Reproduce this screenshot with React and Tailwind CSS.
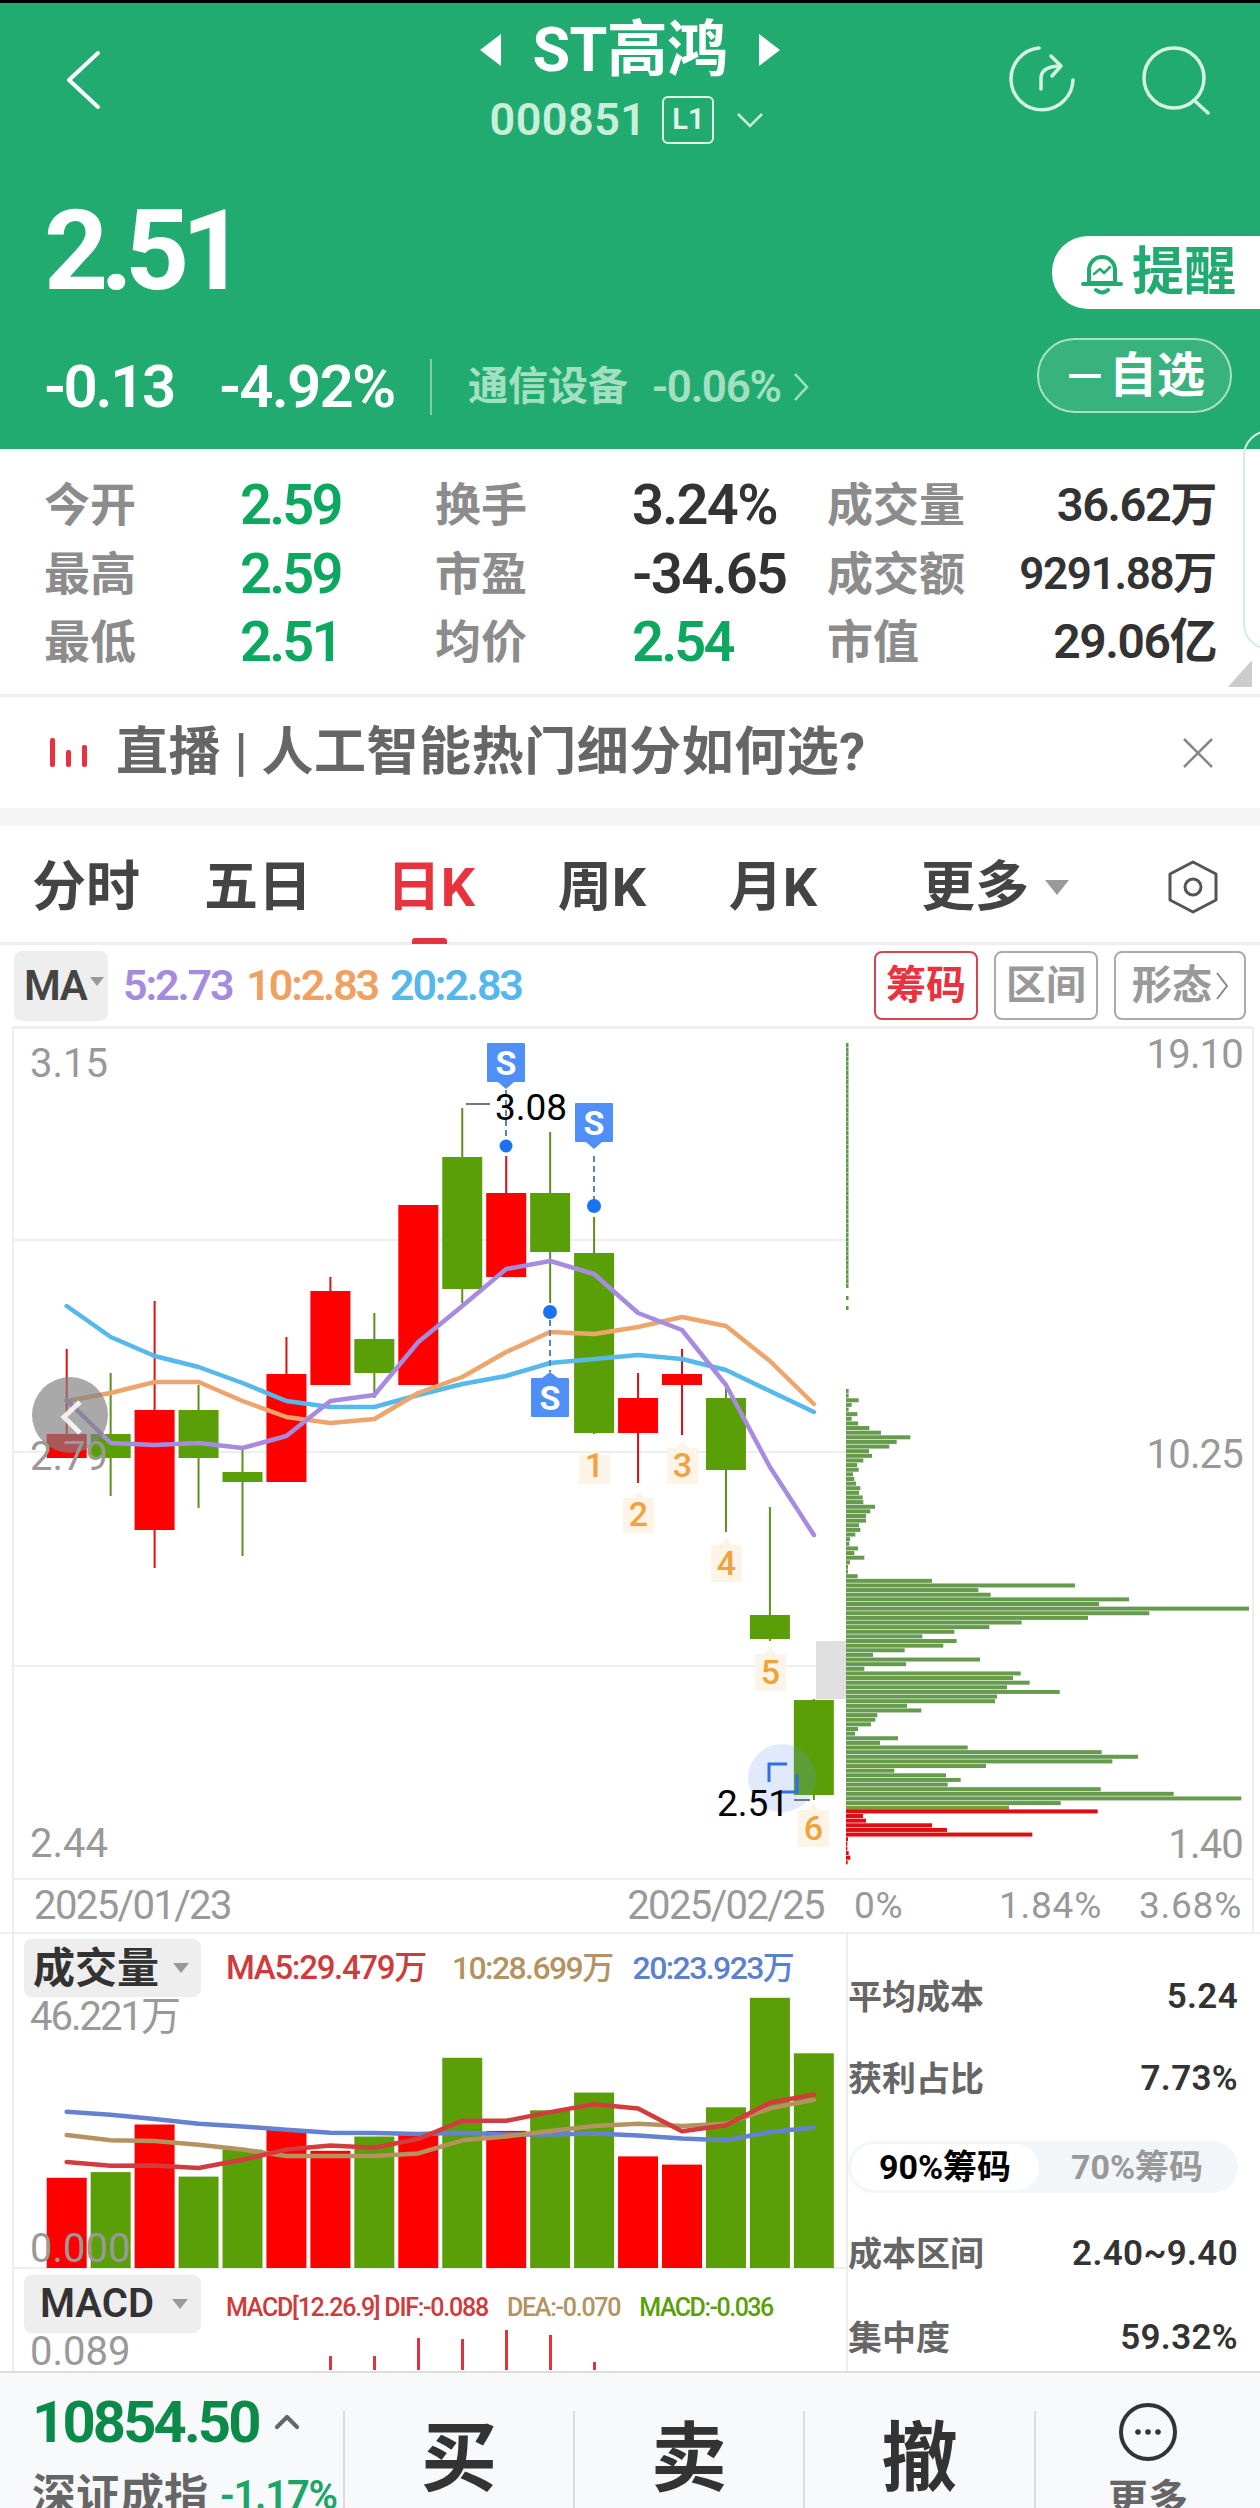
import { ChevronUp } from 'lucide-react';

const GREEN = '#5b9f08';
const RED = '#ff0000';

// candles measured off the reference: [kind, wickTop, bodyTop, bodyBottom, wickBottom]
const candles = [
  ['r', 1349, 1434, 1458, 1458], ['g', 1373, 1434, 1458, 1496], ['r', 1301, 1410, 1530, 1568],
  ['g', 1385, 1410, 1458, 1508], ['g', 1450, 1472, 1482, 1556], ['r', 1337, 1374, 1482, 1482],
  ['r', 1277, 1291, 1385, 1385], ['g', 1313, 1339, 1373, 1398], ['r', 1205, 1205, 1385, 1385],
  ['g', 1108, 1157, 1289, 1303], ['r', 1156, 1193, 1277, 1277], ['g', 1132, 1193, 1252, 1303],
  ['g', 1217, 1253, 1433, 1434], ['r', 1373, 1398, 1433, 1483], ['r', 1349, 1374, 1385, 1435],
  ['g', 1385, 1398, 1470, 1532], ['g', 1507, 1615, 1639, 1641], ['g', 1699, 1700, 1795, 1800],
];
const cx = (i) => 66.7 + i * 43.95;

const line = (ys) => ys.map((y, i) => `${cx(i).toFixed(1)},${y}`).join(' ');

const ma20 = [1306, 1337, 1356, 1367, 1383, 1401, 1407, 1407, 1395, 1384, 1376, 1363, 1359, 1355, 1359, 1370, 1391, 1412];
const ma10 = [1401, 1393, 1382, 1382, 1401, 1417, 1423, 1419, 1393, 1377, 1352, 1332, 1334, 1327, 1317, 1326, 1361, 1404];
const ma5 = [1400, 1443, 1445, 1443, 1448, 1436, 1401, 1395, 1342, 1306, 1269, 1261, 1274, 1313, 1330, 1385, 1467, 1535];

const volTops = [690, 675, 548, 687, 615, 560, 618, 580, 575, 370, 565, 510, 463, 633, 655, 502, 210, 358];
const vy = (z) => +(1920 + z * 0.375).toFixed(1);
const volBlue = [514, 522, 533, 546, 553, 562, 570, 571, 573, 570, 575, 575, 572, 577, 585, 590, 568, 556].map(vy);
const volBrown = [576, 590, 592, 602, 615, 632, 632, 632, 625, 590, 580, 565, 552, 546, 552, 546, 505, 482].map(vy);
const volRed = [648, 658, 657, 664, 642, 615, 604, 610, 586, 538, 538, 515, 494, 505, 566, 550, 490, 468].map(vy);

// chip distribution bar lengths, bottom of the high section down to the low end
const chipGreen = [
  8, 8, 38, 17, 8, 34, 17, 36, 70, 105, 193, 152, 130, 69, 78, 52, 33, 38, 21, 25, 30, 43, 39, 50,
  52, 87, 73, 60, 60, 39, 43, 28, 12, 10, 36, 25, 55, 12, 6, 6, 35, 258, 687, 397, 434, 849, 759, 1209, 910, 726,
  527, 430, 325, 229, 332, 292, 176, 81, 402, 180, 55, 524, 501, 551, 483, 641, 453, 447, 183, 226, 94, 88, 75,
  36, 27, 156, 102, 365, 767, 876, 799, 420, 145, 300, 344, 305, 764, 983, 1186, 644, 489,
];
const chipRed = [755, 51, 60, 258, 303, 559, 6, 4, 4, 8, 13, 5];
const thinRows = Array.from({ length: 53 }, (_, i) => 1043 + i * 4.63);

const grayNum = "absolute text-[40px] leading-[40px] text-[#999]";
const statLabel = "text-[46px] leading-[68px] text-[#8c8c8c] font-bold";
const statGreen = "text-[56px] leading-[68px] font-semibold tracking-[-0.05em] text-[#0ca85f]";
const statDark = "text-[56px] leading-[68px] font-semibold tracking-[-0.03em] text-[#333]";
const statRight = "text-right leading-[68px] font-semibold tracking-[-0.03em] text-[#333]";

function SMark({ x, y, down }) {
  return (
    <g>
      <rect x={x} y={y} width="38" height="39" rx="1" fill="#4f8ff7" />
      {down
        ? <path d={`M${x + 11} ${y + 39} L${x + 19} ${y + 46} L${x + 27} ${y + 39} Z`} fill="#4f8ff7" />
        : <path d={`M${x + 11} ${y} L${x + 19} ${y - 6} L${x + 27} ${y} Z`} fill="#4f8ff7" />}
      <text x={x + 19} y={y + 32} textAnchor="middle" fontSize="34" fontWeight="700" fill="#fff">S</text>
    </g>
  );
}

function NumTag({ x, top, bottom, n }) {
  return (
    <g>
      <path d={`M${x} ${top + 7} L${x + 10} ${top + 7} L${x + 15.5} ${top} L${x + 21} ${top + 7} L${x + 31} ${top + 7} L${x + 31} ${bottom} L${x} ${bottom} Z`} fill="#fdf4e8" />
      <text x={x + 15.5} y={bottom - 7} textAnchor="middle" fontSize="34" fontWeight="500" fill="#f2a23c">{n}</text>
    </g>
  );
}

function KChart() {
  return (
    <svg className="absolute inset-0" width="832" height="849" viewBox="14 1029 832 849">
      {[1240, 1452, 1666].map((y) => <rect key={y} x="14" y={y - 1} width="832" height="2" fill="#eeeeee" />)}
      <rect x="816" y="1641" width="30" height="58" fill="#e0e0e0" />
      {candles.map(([k, wt, bt, bb, wb], i) => {
        const c = k === 'r' ? RED : GREEN;
        return (
          <g key={i}>
            <rect x={cx(i) - 1} y={wt} width="2" height={wb - wt} fill={k === 'r' ? '#e01010' : '#5f8f20'} />
            <rect x={cx(i) - 20} y={bt} width="40" height={bb - bt} fill={c} />
          </g>
        );
      })}
      <polyline points={line(ma20)} fill="none" stroke="#57b8ec" strokeWidth="4.5" strokeLinejoin="round" strokeLinecap="round" />
      <polyline points={line(ma10)} fill="none" stroke="#eda56c" strokeWidth="4.5" strokeLinejoin="round" strokeLinecap="round" />
      <polyline points={line(ma5)} fill="none" stroke="#a68be0" strokeWidth="4.5" strokeLinejoin="round" strokeLinecap="round" />

      {/* scroll-back handle */}
      <circle cx="70" cy="1415" r="38" fill="#808080" fillOpacity="0.68" />
      <polyline points="80,1402 64,1417 80,1433" fill="none" stroke="#fff" strokeOpacity="0.85" strokeWidth="5" />

      {/* trade marks */}
      <line x1="506" y1="1090" x2="506" y2="1140" stroke="#4a88c8" strokeWidth="2" strokeDasharray="6 4" />
      <circle cx="506" cy="1146" r="6.5" fill="#1a73f0" />
      <line x1="594" y1="1156" x2="594" y2="1200" stroke="#4a88c8" strokeWidth="2" strokeDasharray="6 4" />
      <circle cx="594" cy="1206" r="7" fill="#1a73f0" />
      <line x1="550" y1="1320" x2="550" y2="1372" stroke="#4a88c8" strokeWidth="2" strokeDasharray="6 4" />
      <circle cx="550" cy="1312" r="7" fill="#1a73f0" />
      <SMark x={487} y={1043} down />
      <SMark x={575} y={1103} down />
      <SMark x={531} y={1378} />

      <NumTag x={579} top={1448} bottom={1484} n="1" />
      <NumTag x={623} top={1491} bottom={1533} n="2" />
      <NumTag x={667} top={1441} bottom={1484} n="3" />
      <NumTag x={711} top={1538} bottom={1582} n="4" />
      <NumTag x={755} top={1647} bottom={1691} n="5" />
      <NumTag x={798} top={1803} bottom={1847} n="6" />

      <rect x="466" y="1103" width="24" height="2" fill="#777" />
      <text x="495" y="1120" fontSize="37" fill="#000">3.08</text>

      {/* latest price focus */}
      <circle cx="782" cy="1778" r="34" fill="#6496f0" fillOpacity="0.2" />
      <path d="M769 1782 V1764 H787" fill="none" stroke="#2f6fe8" strokeWidth="3" />
      <path d="M797 1774 V1792 H779" fill="none" stroke="#2f6fe8" strokeWidth="3" />
      <text x="717" y="1816" fontSize="37" fill="#000">2.51</text>
      <rect x="794" y="1799" width="16" height="2" fill="#777" />
    </svg>
  );
}

function ChipChart() {
  return (
    <svg className="absolute inset-0" width="406" height="849" viewBox="846 1029 406 849">
      {thinRows.map((y) => <rect key={y} x="846" y={y} width="2.5" height="4.2" fill="#5f9a45" />)}
      <rect x="846" y="1296" width="2.5" height="4" fill="#5f9a45" />
      <rect x="846" y="1306" width="2.5" height="4" fill="#5f9a45" />
      {chipGreen.map((w, i) => (
        <rect key={i} x="846" y={1389 + i * 4.63} width={w / 3} height="4" fill={i === chipGreen.length - 1 ? '#7d9a3f' : '#669b4d'} />
      ))}
      {chipRed.map((w, i) => (
        <rect key={i} x="846" y={1809.4 + i * 4.63} width={w / 3} height="4" fill="#e00c12" />
      ))}
    </svg>
  );
}

function VolChart() {
  return (
    <svg className="absolute inset-0" width="832" height="335" viewBox="14 1935 832 335">
      {volTops.map((t, i) => (
        <rect key={i} x={cx(i) - 20} y={vy(t)} width="40" height={2269 - vy(t)} fill={candles[i][0] === 'r' ? RED : GREEN} />
      ))}
      <polyline points={line(volBlue)} fill="none" stroke="#6482d2" strokeWidth="4.5" strokeLinejoin="round" strokeLinecap="round" />
      <polyline points={line(volBrown)} fill="none" stroke="#b3935f" strokeWidth="4.5" strokeLinejoin="round" strokeLinecap="round" />
      <polyline points={line(volRed)} fill="none" stroke="#d23c3c" strokeWidth="4.5" strokeLinejoin="round" strokeLinecap="round" />
    </svg>
  );
}

function ChipRow({ label, value, className }) {
  return (
    <div className={`flex items-center justify-between h-[40px] ${className}`}>
      <span className="text-[34px] font-bold text-[#666]">{label}</span>
      <span className="text-[35px] font-semibold tracking-[0.01em] text-[#333]">{value}</span>
    </div>
  );
}

export default function App() {
  return (
    <div className="relative w-[1260px] h-[2508px] overflow-hidden bg-white font-['Roboto','Noto_Sans_CJK_SC',sans-serif]">
      {/* Quote header */}
      <header className="h-[449px] border-t-[3px] border-black bg-[#22ab70]">
        <div className="grid grid-cols-[1fr_auto_1fr] h-[193px]">
          <div className="pl-[66px] pt-[47px]">
            <svg width="34" height="60" viewBox="0 0 34 60" fill="none" stroke="#fff" strokeWidth="4" strokeLinecap="round" strokeLinejoin="round">
              <polyline points="32,3 3,30 32,57" />
            </svg>
          </div>
          <div className="flex flex-col items-center pt-[14px]">
            <div className="flex items-center gap-[32px] h-[66px]">
              <span className="w-0 h-0 border-y-[16px] border-y-transparent border-r-[21px] border-r-white" />
              <span className="text-[61px] leading-[66px] font-bold text-white tracking-[-0.01em]">ST高鸿</span>
              <span className="w-0 h-0 border-y-[16px] border-y-transparent border-l-[21px] border-l-white" />
            </div>
            <div className="flex items-center mt-[12px] -ml-[6px]">
              <span className="text-[45px] leading-[50px] font-semibold tracking-[0.01em] text-[#c9efdc]">000851</span>
              <span className="ml-[16px] flex items-center justify-center w-[52px] h-[48px] rounded-[6px] border-2 border-[#e4f5ec] text-[29px] font-semibold text-[#e4f5ec]">L1</span>
              <svg className="ml-[22px]" width="28" height="16" viewBox="0 0 28 16" fill="none" stroke="#c9efdc" strokeWidth="2.5">
                <polyline points="2,2 14,14 26,2" />
              </svg>
            </div>
          </div>
          <div className="flex justify-end gap-[66px] pr-[50px] pt-[42px]">
            <svg width="68" height="68" viewBox="0 0 68 68" fill="none" stroke="#d5f2e4" strokeWidth="3.5" strokeLinecap="round" strokeLinejoin="round">
              <path d="M31 3 A31 31 0 1 0 65 35" />
              <path d="M33 44 V33 Q33 22 51 21" />
              <polyline points="43,11 53,21 44,31" />
            </svg>
            <svg width="68" height="70" viewBox="0 0 68 70" fill="none" stroke="#d5f2e4" strokeWidth="3.5" strokeLinecap="round">
              <circle cx="32" cy="33" r="30" />
              <line x1="54" y1="57" x2="66" y2="68" />
            </svg>
          </div>
        </div>

        <div className="flex justify-between">
          <div className="pl-[44px]">
            <div className="text-[112px] leading-[110px] font-bold tracking-[-0.07em] text-white">2.51</div>
            <div className="flex items-center h-[60px] mt-[51px]">
              <span className="w-[175px] text-[60px] font-semibold tracking-[-0.04em] text-white">-0.13</span>
              <span className="w-[211px] text-[60px] font-semibold tracking-[-0.03em] text-white">-4.92%</span>
              <span className="h-[56px] border-l-2 border-[#7fcfa8]" />
              <span className="ml-[36px] text-[40px] font-bold text-[#a3e0c2]">通信设备</span>
              <span className="ml-[24px] text-[44px] font-semibold tracking-[-0.03em] text-[#a3e0c2]">-0.06%</span>
              <svg className="ml-[12px]" width="16" height="30" viewBox="0 0 16 30" fill="none" stroke="#a3e0c2" strokeWidth="2.5">
                <polyline points="2,2 14,15 2,28" />
              </svg>
            </div>
          </div>
          <div className="flex flex-col items-end pt-[40px]">
            <div className="flex items-center w-[208px] h-[73px] rounded-l-[36px] bg-white pl-[28px]">
              <svg width="44" height="46" viewBox="0 0 44 46" fill="none" stroke="#22ab70" strokeWidth="4" strokeLinejoin="round" strokeLinecap="round">
                <path d="M9 33 V20 a13 13 0 0 1 26 0 V33 Z" />
                <path d="M3 34 H41" />
                <path d="M16 40 q6 5 12 0" />
                <path d="M14 24 l6 -5 l4 4 l6 -6" strokeWidth="2.5" />
              </svg>
              <span className="ml-[8px] text-[52px] leading-[60px] font-bold text-[#22ab70]">提醒</span>
            </div>
            <div className="flex items-center w-[195px] h-[75px] mt-[29px] mr-[28px] rounded-[38px] border-2 border-[#a9e0c6] bg-white/10 pl-[30px]">
              <span className="w-[32px] h-[4px] bg-white" />
              <span className="ml-[8px] text-[48px] leading-[60px] font-bold text-white">自选</span>
            </div>
          </div>
        </div>
      </header>

      {/* Stats */}
      <section className="relative h-[248px] border-b-[3px] border-[#eeeeee] pt-[22px] pl-[44px]">
        <div className="grid grid-cols-[196px_195px_197px_195px_160px_229px] auto-rows-[68.5px] items-center">
          <span className={statLabel}>今开</span><span className={statGreen}>2.59</span>
          <span className={statLabel}>换手</span><span className={statDark}>3.24%</span>
          <span className={statLabel}>成交量</span><span className={`${statRight} text-[47px]`}>36.62万</span>
          <span className={statLabel}>最高</span><span className={statGreen}>2.59</span>
          <span className={statLabel}>市盈</span><span className={statDark}>-34.65</span>
          <span className={statLabel}>成交额</span><span className={`${statRight} text-[44px]`}>9291.88万</span>
          <span className={statLabel}>最低</span><span className={statGreen}>2.51</span>
          <span className={statLabel}>均价</span><span className={statGreen}>2.54</span>
          <span className={statLabel}>市值</span><span className={`${statRight} text-[48px]`}>29.06亿</span>
        </div>
        <span className="absolute right-[8px] bottom-[7px] w-[24px] h-[27px] bg-[#cccccc] [clip-path:polygon(100%_0,100%_100%,0_100%)]" />
      </section>
      <div className="absolute left-[1243px] top-[430px] w-[30px] h-[220px] rounded-l-[26px] border-2 border-[#cfeee8]" />

      {/* Live banner */}
      <section className="flex items-center h-[111px] pl-[50px] pr-[46px]">
        <svg width="38" height="30" viewBox="0 0 38 30" fill="#e8333f">
          <rect x="0" y="0" width="5" height="29" rx="2" />
          <rect x="16" y="12" width="5" height="17" rx="2" />
          <rect x="32" y="7" width="5" height="22" rx="2" />
        </svg>
        <span className="ml-[28px] text-[52px] leading-[60px] font-bold tracking-[0.01em] text-[#666]">直播 | 人工智能热门细分如何选?</span>
        <svg className="ml-auto" width="32" height="32" viewBox="0 0 32 32" stroke="#888" strokeWidth="2.5">
          <line x1="2" y1="2" x2="30" y2="30" />
          <line x1="30" y1="2" x2="2" y2="30" />
        </svg>
      </section>
      <div className="h-[18px] bg-[#f5f5f5]" />

      {/* Period tabs */}
      <nav className="relative flex items-center h-[119px] pt-[6px] border-b-[3px] border-[#eeeeee] text-[54px] font-bold text-[#444]">
        <span className="w-[172px] text-center">分时</span>
        <span className="w-[172px] text-center">五日</span>
        <span className="relative w-[174px] text-center text-[#e8333f]">
          日K
          <span className="absolute left-[68px] -bottom-[16px] w-[35px] h-[6px] rounded-t-[3px] bg-[#e8333f]" />
        </span>
        <span className="w-[168px] text-center">周K</span>
        <span className="w-[174px] text-center">月K</span>
        <span className="w-[230px] text-center">更多</span>
        <span className="-ml-[45px] w-0 h-0 border-x-[12px] border-x-transparent border-t-[15px] border-t-[#999]" />
        <svg className="ml-[98px]" width="52" height="54" viewBox="0 0 52 54" fill="none" stroke="#555" strokeWidth="3">
          <polygon points="26,2 49,14 49,40 26,52 3,40 3,14" strokeLinejoin="round" />
          <circle cx="26" cy="27" r="8" />
        </svg>
      </nav>

      {/* Indicator row */}
      <div className="flex items-center h-[81px] pl-[14px] pr-[14px]">
        <div className="flex items-center w-[94px] h-[70px] rounded-[8px] bg-[#eeeeee] pl-[10px]">
          <span className="text-[42px] font-semibold text-[#444] tracking-[-0.03em]">MA</span>
          <span className="ml-[3px] -mt-[8px] w-0 h-0 border-x-[7px] border-x-transparent border-t-[9px] border-t-[#999]" />
        </div>
        <span className="ml-[15px] text-[43px] font-semibold tracking-[-0.05em] text-[#a58be0]">5:2.73</span>
        <span className="ml-[14px] text-[43px] font-semibold tracking-[-0.05em] text-[#f0a060]">10:2.83</span>
        <span className="ml-[12px] text-[43px] font-semibold tracking-[-0.05em] text-[#55b8ec]">20:2.83</span>
        <span className="ml-auto flex items-center justify-center w-[104px] h-[69px] rounded-[8px] border-2 border-[#d9434e] text-[40px] font-bold text-[#e8333f]">筹码</span>
        <span className="ml-[16px] flex items-center justify-center w-[104px] h-[69px] rounded-[8px] border-2 border-[#aaa] text-[40px] font-bold text-[#999]">区间</span>
        <span className="ml-[16px] flex items-center justify-center gap-[4px] w-[132px] h-[69px] rounded-[8px] border-2 border-[#aaa] text-[40px] font-bold text-[#999]">
          形态
          <svg width="12" height="28" viewBox="0 0 12 28" fill="none" stroke="#888" strokeWidth="2"><polyline points="1,1 11,14 1,27" /></svg>
        </span>
      </div>

      {/* K-line + chip distribution */}
      <div className="flex w-[1242px] h-[906px] ml-[12px] border-x-2 border-t-[3px] border-[#eeeeee]">
        <div className="w-[832px] shrink-0">
          <div className="relative h-[849px]">
            <KChart />
            <span className={`${grayNum} left-[16px] top-[15px]`}>3.15</span>
            <span className={`${grayNum} left-[16px] top-[408px]`}>2.79</span>
            <span className={`${grayNum} left-[16px] top-[795px]`}>2.44</span>
          </div>
          <div className="flex justify-between items-center h-[54px] pl-[20px] pr-[22px] border-t-2 border-[#eeeeee] text-[40px] tracking-[-0.04em] text-[#999]">
            <span>2025/01/23</span>
            <span>2025/02/25</span>
          </div>
        </div>
        <div className="flex-1">
          <div className="relative h-[849px]">
            <ChipChart />
            <span className={`${grayNum} right-[9px] top-[6px] tracking-[-0.02em]`}>19.10</span>
            <span className={`${grayNum} right-[9px] top-[406px] tracking-[-0.02em]`}>10.25</span>
            <span className={`${grayNum} right-[9px] top-[796px] tracking-[-0.02em]`}>1.40</span>
          </div>
          <div className="flex justify-between items-center h-[54px] pl-[8px] pr-[10px] border-t-2 border-[#eeeeee] text-[37px] text-[#999] tracking-[0.02em]">
            <span className="w-[138px]">0%</span>
            <span>1.84%</span>
            <span className="ml-[30px]">3.68%</span>
          </div>
        </div>
      </div>

      {/* Volume / MACD + chip stats */}
      <div className="flex h-[439px] border-t-2 border-[#eeeeee]">
        <div className="w-[834px] ml-[12px] border-l-2 border-[#eeeeee] shrink-0">
          <div className="relative h-[335px] border-b-2 border-[#eeeeee]">
            <VolChart />
            <div className="relative flex items-center pt-[5px] pl-[10px]">
              <div className="flex items-center w-[177px] h-[58px] rounded-[8px] bg-[#eeeeee] pl-[9px]">
                <span className="text-[42px] font-bold text-[#333]">成交量</span>
                <span className="ml-[14px] w-0 h-0 border-x-[8px] border-x-transparent border-t-[10px] border-t-[#999]" />
              </div>
              <span className="ml-[25px] text-[33px] font-medium tracking-[-0.04em] text-[#cf3b3b]">MA5:29.479万</span>
              <span className="ml-[26px] text-[32px] font-medium tracking-[-0.05em] text-[#b3935f]">10:28.699万</span>
              <span className="ml-[20px] text-[32px] font-medium tracking-[-0.05em] text-[#5d7fd0]">20:23.923万</span>
            </div>
            <span className={`${grayNum} left-[16px] top-[63px] tracking-[-0.05em]`}>46.221万</span>
            <span className={`${grayNum} left-[16px] top-[295px]`}>0.000</span>
          </div>
          <div className="relative h-[102px]">
            <div className="flex items-center pt-[6px] pl-[10px]">
              <div className="flex items-center w-[177px] h-[58px] rounded-[8px] bg-[#eeeeee] pl-[16px]">
                <span className="text-[40px] font-semibold text-[#333]">MACD</span>
                <span className="ml-[18px] w-0 h-0 border-x-[8px] border-x-transparent border-t-[10px] border-t-[#999]" />
              </div>
              <span className="ml-[25px] mt-[8px] text-[25px] font-medium tracking-[-0.05em] text-[#cf3b3b]">MACD[12.26.9] DIF:-0.088</span>
              <span className="ml-[19px] mt-[8px] text-[25px] font-medium tracking-[-0.05em] text-[#b3935f]">DEA:-0.070</span>
              <span className="ml-[19px] mt-[8px] text-[25px] font-medium tracking-[-0.06em] text-[#5b9f08]">MACD:-0.036</span>
            </div>
            <span className={`${grayNum} left-[16px] top-[63px]`}>0.089</span>
            <svg className="absolute inset-0" width="832" height="102" viewBox="14 2270 832 102" fill="#e0333f">
              <rect x="329" y="2357" width="3" height="14" />
              <rect x="373" y="2357" width="3" height="14" />
              <rect x="417" y="2339" width="3" height="32" />
              <rect x="461" y="2340" width="3" height="31" />
              <rect x="505" y="2331" width="3" height="40" />
              <rect x="549" y="2336" width="3" height="35" />
              <rect x="593" y="2363" width="3" height="8" />
            </svg>
          </div>
        </div>
        <div className="flex-1 pr-[22px] border-l-2 border-[#eeeeee]">
          <ChipRow className="mt-[43px]" label="平均成本" value="5.24" />
          <ChipRow className="mt-[42px]" label="获利占比" value="7.73%" />
          <div className="flex items-center h-[52px] mt-[42px] p-[3px] rounded-full bg-[#f3f6f9] text-[34px] font-bold">
            <span className="w-[188px] h-[46px] flex items-center justify-center rounded-full bg-white text-black">90%筹码</span>
            <span className="flex-1 text-center text-[#999]">70%筹码</span>
          </div>
          <ChipRow className="mt-[41px]" label="成本区间" value="2.40~9.40" />
          <ChipRow className="mt-[44px]" label="集中度" value="59.32%" />
        </div>
      </div>

      {/* Bottom trade bar */}
      <footer className="absolute left-0 top-[2371px] flex w-[1260px] h-[137px] overflow-hidden border-t-2 border-[#dddddd] bg-[#f8f9fb]">
        <div className="w-[343px] shrink-0 pl-[32px] pt-[23px]">
          <div className="flex items-center h-[52px]">
            <span className="text-[58px] font-bold tracking-[-0.05em] text-[#0b8a4a]">10854.50</span>
            <ChevronUp className="ml-[8px]" size={40} strokeWidth={2.5} color="#666" />
          </div>
          <div className="flex items-center mt-[18px] h-[60px]">
            <span className="text-[44px] font-bold text-[#666]">深证成指</span>
            <span className="ml-[12px] text-[40px] font-semibold tracking-[-0.03em] text-[#1aa56b]">-1.17%</span>
          </div>
        </div>
        <div className="flex justify-center w-[230px] mt-[38px] border-l-2 border-[#dddddd] text-[76px] font-bold text-[#333] leading-[96px]">买</div>
        <div className="flex justify-center w-[230px] mt-[38px] border-l-2 border-[#dddddd] text-[76px] font-bold text-[#333] leading-[96px]">卖</div>
        <div className="flex justify-center w-[231px] mt-[38px] border-l-2 border-[#dddddd] text-[76px] font-bold text-[#333] leading-[96px]">撤</div>
        <div className="flex-1 flex flex-col items-center mt-[38px] border-l-2 border-[#dddddd]">
          <svg className="shrink-0 -mt-[9px]" width="60" height="60" viewBox="0 0 60 60" fill="#333">
            <circle cx="30" cy="30" r="27" fill="none" stroke="#333" strokeWidth="4" />
            <circle cx="20" cy="30" r="2.8" />
            <circle cx="30" cy="30" r="2.8" />
            <circle cx="40" cy="30" r="2.8" />
          </svg>
          <span className="mt-[14px] text-[40px] leading-[48px] font-bold text-[#666]">更多</span>
        </div>
      </footer>
    </div>
  );
}
